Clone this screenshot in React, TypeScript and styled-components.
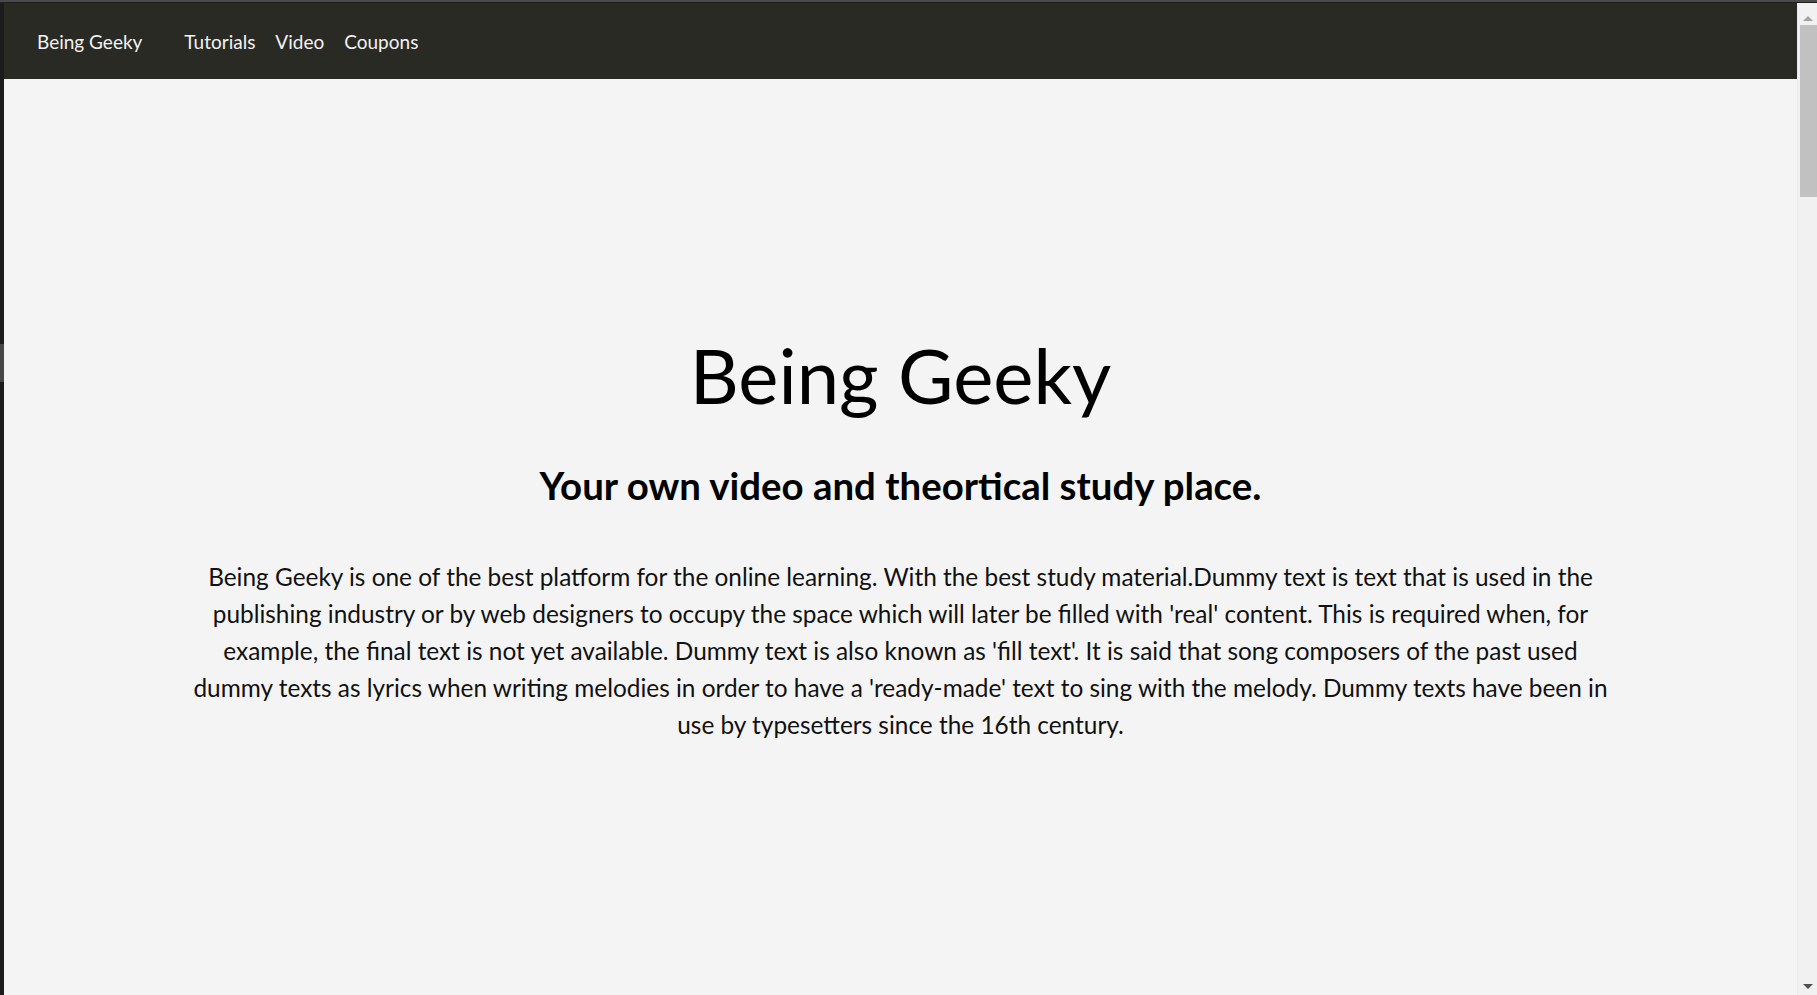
import React from 'react';
import styled, { createGlobalStyle } from 'styled-components';

const GlobalStyle = createGlobalStyle`
  html, body {
    margin: 0;
    padding: 0;
    height: 100%;
    overflow: hidden;
  }
  body {
    font-family: Lato, 'Liberation Sans', sans-serif;
    background: #1c1c1c;
  }
  #root {
    height: 100%;
  }
`;

const Frame = styled.div`
  display: flex;
  flex-direction: column;
  height: 100vh;
`;

const TopStrip = styled.div`
  height: 3px;
  background: linear-gradient(to bottom, #4a4a4a 0, #4a4a4a 2px, #1f1f1f 2px);
  flex-shrink: 0;
`;

const Body = styled.div`
  display: flex;
  flex: 1;
  min-height: 0;
`;

const LeftEdge = styled.div`
  width: 4px;
  background: #1c1c1c;
  display: flex;
  flex-direction: column;
`;

const EdgeNotch = styled.div`
  margin-top: 341px;
  height: 38px;
  background: #464646;
`;

const Page = styled.div`
  flex: 1;
  display: flex;
  flex-direction: column;
  background: #f4f4f4;
`;

const Nav = styled.nav`
  height: 76px;
  background: #2a2a25;
  display: flex;
  align-items: center;
  padding-left: 33px;
  flex-shrink: 0;
`;

const Brand = styled.a`
  color: #f2f2f2;
  font-size: 19px;
  text-decoration: none;
  margin-right: 42px;
`;

const NavLinks = styled.ul`
  display: flex;
  gap: 20px;
  list-style: none;
  margin: 0;
  padding: 0;
`;

const NavItem = styled.li`
  a {
    color: #f2f2f2;
    font-size: 19px;
    text-decoration: none;
  }
`;

const Hero = styled.main`
  flex: 1;
  display: flex;
  flex-direction: column;
  align-items: center;
  justify-content: center;
  text-align: center;
  color: #000;
  padding-bottom: 2px;
`;

const Title = styled.h1`
  font-size: 76px;
  font-weight: 400;
  margin: 0;
  line-height: 1.2;
`;

const Subtitle = styled.h2`
  font-size: 38.4px;
  font-weight: 700;
  margin: 42px 0 0;
  line-height: 1.2;
`;

const Text = styled.p`
  font-size: 24.4px;
  line-height: 37px;
  margin: 50px 0 0;
  color: #111;
`;

const ScrollBar = styled.div`
  width: 20px;
  background: #f1f1f1;
  border-left: 1px solid #ebebeb;
  display: flex;
  flex-direction: column;
  align-items: center;
  box-sizing: border-box;
`;

const Arrow = styled.div<{ $down?: boolean; $color: string }>`
  width: 0;
  height: 0;
  border-left: 5px solid transparent;
  border-right: 5px solid transparent;
  ${(p) =>
    p.$down
      ? `border-top: 5px solid ${p.$color}; margin-top: auto; margin-bottom: 6px;`
      : `border-bottom: 5px solid ${p.$color}; margin-top: 13px;`}
`;

const Thumb = styled.div`
  width: 17px;
  height: 172px;
  background: #c1c1c1;
  margin-top: 4px;
  margin-left: 2px;
`;

const App: React.FC = () => {
  return (
    <>
      <GlobalStyle />
      <Frame>
        <TopStrip />
        <Body>
          <LeftEdge>
            <EdgeNotch />
          </LeftEdge>
          <Page>
            <Nav>
              <Brand href='#'>Being Geeky</Brand>
              <NavLinks>
                <NavItem>
                  <a href='#'>Tutorials</a>
                </NavItem>
                <NavItem>
                  <a href='#'>Video</a>
                </NavItem>
                <NavItem>
                  <a href='#'>Coupons</a>
                </NavItem>
              </NavLinks>
            </Nav>
            <Hero>
              <Title>Being Geeky</Title>
              <Subtitle>Your own video and theortical study place.</Subtitle>
              <Text>
                Being Geeky is one of the best platform for the online learning. With the best study
                material.Dummy text is text that is used in the
                <br />
                publishing industry or by web designers to occupy the space which will later be filled
                with 'real' content. This is required when, for
                <br />
                example, the final text is not yet available. Dummy text is also known as 'fill text'.
                It is said that song composers of the past used
                <br />
                dummy texts as lyrics when writing melodies in order to have a 'ready-made' text to
                sing with the melody. Dummy texts have been in
                <br />
                use by typesetters since the 16th century.
              </Text>
            </Hero>
          </Page>
          <ScrollBar>
            <Arrow $color='#a3a3a3' />
            <Thumb />
            <Arrow $down $color='#505050' />
          </ScrollBar>
        </Body>
      </Frame>
    </>
  );
};

export default App;
